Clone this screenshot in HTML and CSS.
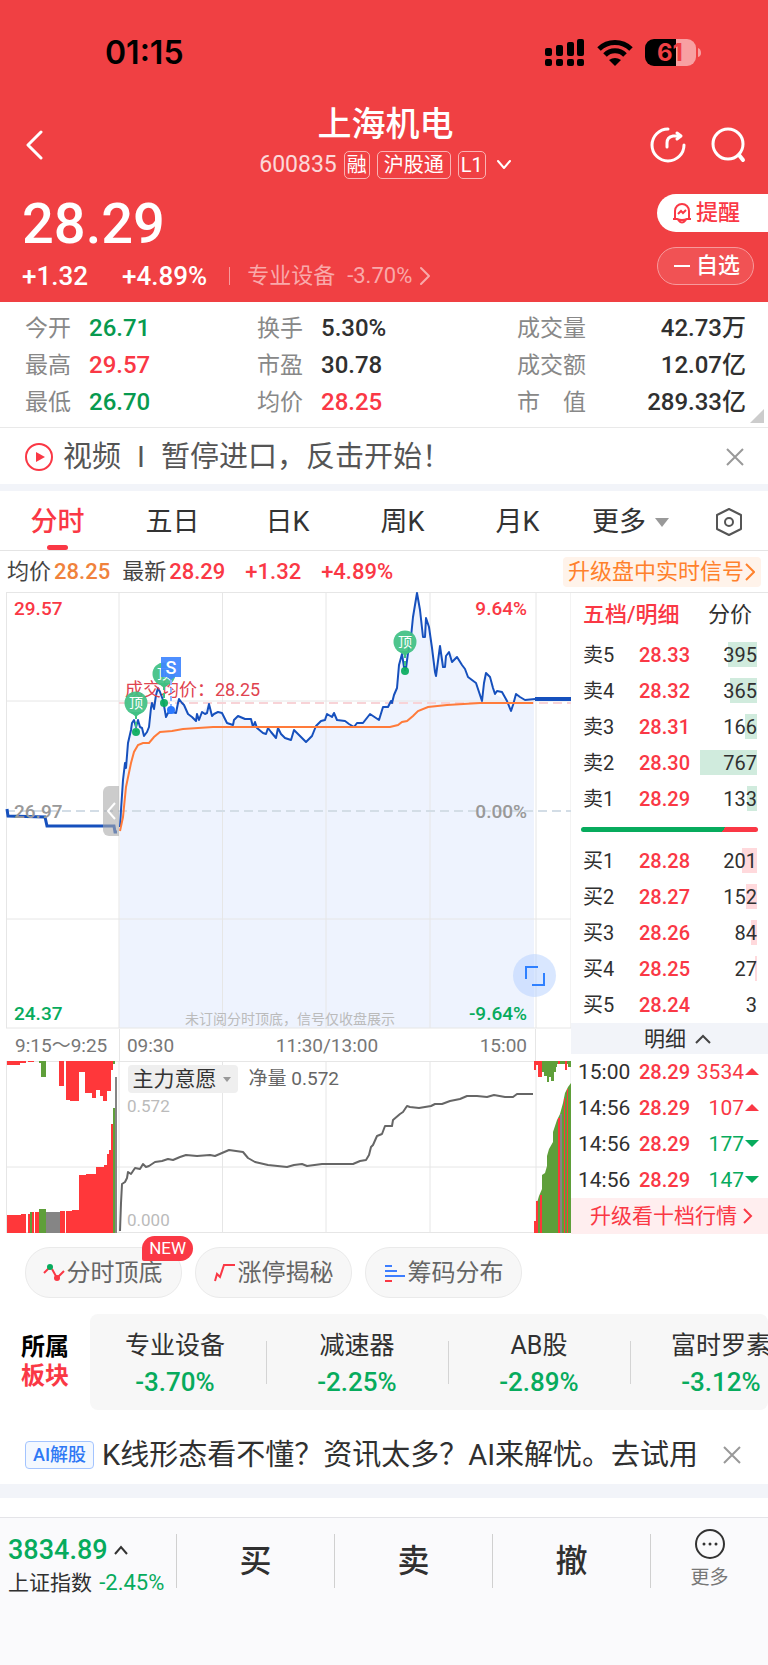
FILE: index.html
```html
<!DOCTYPE html>
<html lang="zh-CN">
<head>
    <meta charset="UTF-8">
    <title>上海机电 600835</title>
    <meta name="viewport" content="width=device-width, initial-scale=1.0">
    <link rel="stylesheet" href="styles.css">
</head>
<body>
    <header class="top">
        <div class="status-bar">
            <span class="clock">01:15</span>
            <svg class="status-icons" width="158" height="28" viewBox="0 0 158 28">
                <rect x="0" y="9" width="7" height="8" rx="2"/>
                <rect x="11" y="6" width="7" height="11" rx="2"/>
                <rect x="22" y="3" width="7" height="14" rx="2"/>
                <rect x="32" y="0" width="7" height="17" rx="2"/>
                <rect x="0" y="20" width="7" height="7" rx="2"/>
                <rect x="11" y="20" width="7" height="7" rx="2"/>
                <rect x="22" y="20" width="7" height="7" rx="2"/>
                <rect x="32" y="20" width="7" height="7" rx="2"/>
                <path d="M54 10 A23 23 0 0 1 86 10" fill="none" stroke="#000" stroke-width="5"/>
                <path d="M60 16 A14 14 0 0 1 80 16" fill="none" stroke="#000" stroke-width="5"/>
                <path d="M64 21 Q70 17 76 21 L70 27 Z"/>
                <path d="M109 0 H131 V27 H109 A9 9 0 0 1 100 18 V9 A9 9 0 0 1 109 0 Z"/>
                <path d="M131 0 H142 A9 9 0 0 1 151 9 V18 A9 9 0 0 1 142 27 H131 Z" fill="#f8a0a2"/>
                <path d="M153 9 Q156 10 156 14 Q156 17 153 18 Z" fill="#f8a0a2"/>
                <text x="125" y="22" class="battery-text" text-anchor="middle">61</text>
            </svg>
        </div>
        <nav class="nav">
            <button class="icon-btn" aria-label="返回">
                <svg width="18" height="32" viewBox="0 0 18 32"><path d="M16 3 L3 16 L16 29"/></svg>
            </button>
            <div class="title">
                <h1>上海机电</h1>
                <div class="code-row">
                    <span class="code">600835</span>
                    <span class="tag">融</span>
                    <span class="tag wide">沪股通</span>
                    <span class="tag">L1</span>
                    <svg class="code-arrow" width="16" height="12" viewBox="0 0 16 12"><path d="M2 2 L8 9 L14 2"/></svg>
                </div>
            </div>
            <div class="nav-right">
                <button class="icon-btn" aria-label="分享">
                    <svg width="36" height="36" viewBox="0 0 36 36">
                        <path d="M18 2 A16 16 0 1 0 34 18"/>
                        <path d="M17 20 V16 Q17 10 23 9 H29"/>
                        <path d="M27 6 L31 9 L27 12" />
                    </svg>
                </button>
                <button class="icon-btn" aria-label="搜索">
                    <svg width="36" height="36" viewBox="0 0 36 36">
                        <circle cx="18" cy="17" r="15"/>
                        <path d="M29 28 L33 33" stroke-width="4"/>
                    </svg>
                </button>
            </div>
        </nav>
        <div class="quote">
            <div class="quote-left">
                <div class="price">28.29</div>
                <div class="change">
                    <span>+1.32</span>
                    <span>+4.89%</span>
                    <a class="industry" href="#">专业设备 <span>-3.70%</span>
                        <svg width="12" height="20" viewBox="0 0 12 20"><path d="M2 2 L10 10 L2 18"/></svg>
                    </a>
                </div>
            </div>
            <div class="quote-right">
                <button class="remind">
                    <svg width="20" height="22" viewBox="0 0 20 22">
                        <path d="M3 17 V9 A7 7 0 0 1 17 9 V17 M1 17 H5 Q10 19 15 17 H19 M6 18 Q10 23 14 18 M6 12 L9 9 L11 11 L14 8"/>
                    </svg>提醒
                </button>
                <button class="fav">
                    <svg width="20" height="22" viewBox="0 0 20 22"><path d="M2 11 H18"/></svg>自选
                </button>
            </div>
        </div>
    </header>

    <section class="stats">
        <dl>
            <div><dt>今开</dt><dd class="down-deep">26.71</dd></div>
            <div><dt>最高</dt><dd class="up">29.57</dd></div>
            <div><dt>最低</dt><dd class="down-deep">26.70</dd></div>
        </dl>
        <dl>
            <div><dt>换手</dt><dd>5.30%</dd></div>
            <div><dt>市盈</dt><dd>30.78</dd></div>
            <div><dt>均价</dt><dd class="up">28.25</dd></div>
        </dl>
        <dl class="last">
            <div><dt>成交量</dt><dd>42.73万</dd></div>
            <div><dt>成交额</dt><dd>12.07亿</dd></div>
            <div><dt>市　值</dt><dd>289.33亿</dd></div>
        </dl>
        <span class="corner"></span>
    </section>

    <section class="news">
        <svg width="28" height="28" viewBox="0 0 28 28">
            <circle cx="14" cy="14" r="13" fill="none" stroke="#fa3845" stroke-width="2"/>
            <path d="M11 9 L20 14 L11 19 Z" fill="#fa3845"/>
        </svg>
        <a href="#">视频<span class="bar">I</span>暂停进口，反击开始！</a>
        <button class="close" aria-label="关闭"><svg width="18" height="18" viewBox="0 0 18 18"><path d="M1 1 L17 17 M17 1 L1 17"/></svg></button>
    </section>

    <nav class="tabs">
        <button class="active">分时</button>
        <button>五日</button>
        <button>日K</button>
        <button>周K</button>
        <button>月K</button>
        <button>更多<span class="caret"></span></button>
        <button aria-label="设置">
            <svg width="28" height="30" viewBox="0 0 28 30">
                <path d="M14 2 L26 8 V22 L14 28 L2 22 V8 Z"/>
                <circle cx="14" cy="15" r="4"/>
            </svg>
        </button>
    </nav>

    <div class="info">
        <span>均价</span><b class="avg">28.25</b>
        <span class="latest">最新</span><b class="up">28.29</b>
        <b class="up gap">+1.32</b><b class="up gap">+4.89%</b>
        <a class="upgrade" href="#">升级盘中实时信号<svg width="10" height="18" viewBox="0 0 10 18"><path d="M1 1 L9 9 L1 17"/></svg></a>
    </div>

    <main class="market">
        <div class="charts">
            <div class="chart-box">
                <svg class="chart" viewBox="0 0 571 437">
                    <path class="fill" d="M119 436 L120 235 L121 218 L123 188 L125 171 L126 176 L128 151 L132 131 L134 128 L136 135 L138 128 L140 135 L144 144 L149 135 L151 116 L152 111 L154 117 L158 96 L163 108 L166 125 L172 120 L176 121 L179 107 L184 113 L188 122 L196 129 L202 120 L209 112 L212 124 L222 121 L227 131 L233 133 L238 124 L251 127 L257 136 L266 142 L268 136 L276 146 L278 136 L285 146 L291 148 L294 138 L306 150 L316 134 L327 122 L334 121 L337 128 L354 135 L370 122 L379 128 L383 115 L391 109 L397 96 L399 73 L402 62 L406 76 L411 45 L417 1 L423 45 L426 26 L432 56 L436 84 L440 54 L445 75 L449 60 L457 65 L468 85 L476 91 L482 109 L486 81 L495 102 L507 109 L511 119 L516 102 L525 108 L534 107 V436 Z"/>
                    <path class="grid" d="M6.500 0 V436 M119 0 V436 M222.500 0 V436 M326 0 V436 M430 0 V436 M536 0 V436 M571 0 V436 M6 .5 H571 M6 109 H571 M6 327 H571 M6 436 H571"/>
                    <path class="dash-red" d="M119 111 H571"/>
                    <path class="dash-grey" d="M6 219 H571"/>
                    <path class="line-price" d="M7 217 L8 224 L45 225 L47 234 H114 L115 240 H117"/>
                    <path class="line-price thin" d="M120 235 L121 218 L123 188 L125 171 L126 176 L128 151 L131 138 L132 131 L134 128 L136 135 L138 128 L140 135 L142 136 L144 144 L147 140 L149 135 L151 116 L152 111 L154 117 L156 103 L158 96 L160 100 L163 108 L166 125 L168 121 L172 120 L176 121 L178 111 L179 107 L182 111 L184 113 L188 122 L192 125 L196 129 L197 122 L199 128 L202 120 L205 122 L207 121 L209 112 L212 124 L214 122 L218 120 L222 121 L227 131 L233 133 L234 128 L238 124 L245 127 L251 127 L253 135 L255 130 L257 136 L263 141 L266 142 L268 136 L271 140 L276 146 L278 136 L281 142 L285 146 L291 148 L294 138 L297 141 L301 145 L306 150 L312 144 L316 134 L321 129 L325 128 L327 122 L332 125 L334 121 L337 128 L345 129 L349 132 L354 135 L357 131 L363 131 L370 122 L379 128 L383 115 L388 115 L391 109 L392 111 L394 103 L397 96 L399 73 L402 62 L404 75 L406 76 L408 61 L411 45 L413 25 L417 1 L420 18 L423 45 L425 45 L426 26 L429 35 L432 56 L435 80 L436 84 L440 54 L443 75 L445 75 L446 64 L449 60 L452 70 L457 65 L462 73 L465 77 L468 85 L476 91 L479 100 L482 109 L484 91 L486 81 L490 85 L493 96 L495 102 L497 99 L502 100 L507 109 L511 119 L513 113 L516 102 L520 105 L525 108 L535 107"/>
                    <path class="line-price thick" d="M535 107 H571"/>
                    <path class="line-avg" d="M120 239 L123 225 L126 195 L131 171 L134 160 L138 153 L143 151 L149 151 L154 145 L160 140 L172 139 L183 137 L213 135 L253 135 L320 135 L390 135 L398 133 L402 130 L407 129 L413 124 L418 119 L428 115 L447 113 L480 111 L533 111"/>
                    <text class="deal" x="125" y="104">成交均价：28.25</text>
                    <g class="pin">
                        <path d="M136 122 V140 M164 93 V111 M405 61 V79"/>
                        <circle class="dot" cx="136" cy="140" r="4"/>
                        <circle class="dot" cx="164" cy="111" r="4"/>
                        <circle class="dot" cx="405" cy="79" r="4"/>
                        <circle cx="136" cy="111" r="11.500"/><path class="tip" d="M130 120 L136 125 L142 120"/>
                        <circle cx="164" cy="82" r="11.500"/><path class="tip" d="M158 91 L164 96 L170 91"/>
                        <circle cx="405" cy="50" r="11.500"/><path class="tip" d="M399 59 L405 64 L411 59"/>
                        <text x="136" y="116">顶</text>
                        <text x="164" y="87">顶</text>
                        <text x="405" y="55">顶</text>
                    </g>
                    <g class="sell">
                        <path d="M171 88 V115"/>
                        <circle cx="171" cy="118" r="4"/>
                        <rect x="161" y="65" width="20" height="20"/>
                        <path class="tip" d="M167 85 L171 88 L175 85"/>
                        <text x="171" y="82">S</text>
                    </g>
                    <path class="handle" d="M119 194 H109 A6 6 0 0 0 103 200 V238 A6 6 0 0 0 109 244 H119 Z"/>
                    <path class="handle-arrow" d="M115 211 L108 219 L115 227"/>
                    <text class="axis up" x="14" y="23">29.57</text>
                    <text class="axis up end" x="527" y="23">9.64%</text>
                    <text class="axis mid" x="14" y="226">26.97</text>
                    <text class="axis mid end" x="527" y="226">0.00%</text>
                    <text class="axis down" x="14" y="428">24.37</text>
                    <text class="axis down end" x="527" y="428">-9.64%</text>
                    <text class="tip-text" x="185" y="432">未订阅分时顶底，信号仅收盘展示</text>
                </svg>
                <button class="expand" aria-label="全屏">
                    <svg width="20" height="20" viewBox="0 0 20 20"><path d="M1 13 V1 H13 M19 7 V19 H7"/></svg>
                </button>
            </div>
            <div class="times">
                <span class="auction">9:15～9:25</span>
                <div class="session"><span>09:30</span><span>11:30/13:00</span><span>15:00</span></div>
            </div>
            <div class="chart-box">
                <svg class="chart" viewBox="0 0 571 172">
                    <path class="grid" d="M6.500 0 V172 M119 0 V172 M222.500 0 V172 M326 0 V172 M430 0 V172 M536 0 V172 M571 0 V172 M6 .5 H571 M6 106 H571 M6 171.500 H571"/>
                    <!-- auction, unmatched volume hangs from the top -->
                    <path class="bar-red" d="M7 0 V4 H20 V2 H26 V0 Z M28 0 H34 V1 H28 Z M59 0 V25 H64 V0 Z M66 0 V39 H70 V40 H79 V11 H85 V32 H92 V37 H96 V29 H100 V35 H103 V40 H107 V30 H111 V9 H113 V0 Z"/>
                    <path class="bar-green" d="M39 0 V2 H41 V16 H46 V0 Z M113 0 H115 V3 H113 Z"/>
                    <path class="bar-red" d="M7 172 V154 H21 V153 H26 V172 Z M28 172 V153 H30 V172 Z M32 172 V151 H34 V172 Z M35 172 V151 H39 V172 Z M60 172 V150 H65 V172 Z M66 172 V150 H72 V149 H79 V114 H86 V113 H96 V106 H104 V104 H107 V93 H109 V89 H111 V63 H113 V172 Z"/>
                    <path class="bar-green" d="M30 172 V151 H32 V172 Z M39 172 V148 H46 V172 Z M113 172 V47 H115 V172 Z"/>
                    <path class="bar-grey" d="M46 172 V151 H60 V172 Z M115 172 V16 H117 V172 Z"/>
                    <!-- closing auction -->
                    <path class="bar-green" d="M536 172 V145 L539 135 L542 128 V114 L545 112 L547 105 V95 L549 88 L553 81 V71 L557 59 L560 53 L563 42 L565 32 L568 26 L571 22 V172 Z"/>
                    <path class="bar-red" d="M534 172 V160 H536 V140 H538 V172 Z M540 172 V134 H542 V172 Z M558 172 V57 H560 V172 Z M564 172 V37 H565 V172 Z M567 172 V28 H568 V172 Z"/>
                    <path class="bar-grey" d="M560 172 V53 H562 V172 Z"/>
                    <path class="bar-green" d="M541 0 V11 H544 V15 H547 V21 H549 V16 H551 V20 H554 V11 H556 V6 H557 V3 H568 V6 H571 V0 Z"/>
                    <path class="bar-red" d="M534 0 V9 H536 V4 H538 V16 H542 V0 Z M558 0 V3 H560 V0 Z M565 0 V9 H567 V0 Z"/>
                    <path class="line-net" d="M120 170 L121 142 L122 123 L125 121 L127 117 L128 111 L131 113 L135 107 L140 108 L143 103 L146 106 L149 105 L155 101 L162 100 L168 98 L173 99 L180 96 L186 94 L197 95 L210 94 L215 95 L222 92 L229 89 L243 91 L248 97 L255 101 L268 104 L287 106 L294 104 L302 103 L307 105 L322 103 L353 103 L360 100 L366 99 L369 94 L371 86 L373 84 L377 75 L382 73 L385 65 L392 65 L393 59 L400 53 L403 51 L407 45 L410 46 L419 47 L431 45 L435 43 L442 43 L450 40 L460 38 L467 35 L477 35 L487 36 L494 34 L505 36 L513 36 L517 33 L533 33"/>
                    <text class="net-axis" x="127" y="51">0.572</text>
                    <text class="net-axis" x="127" y="165">0.000</text>
                </svg>
                <div class="net-head">
                    <button>主力意愿<span class="caret"></span></button>
                    <span>净量 0.572</span>
                </div>
            </div>
        </div>

        <aside class="book">
            <div class="book-tabs"><button class="active">五档/明细</button><button>分价</button></div>
            <table class="sells">
                <tr><th>卖5</th><td>28.33</td><td class="qty"><i style="width: 29px"></i>395</td></tr>
                <tr><th>卖4</th><td>28.32</td><td class="qty"><i style="width: 27px"></i>365</td></tr>
                <tr><th>卖3</th><td>28.31</td><td class="qty"><i style="width: 12px"></i>166</td></tr>
                <tr><th>卖2</th><td>28.30</td><td class="qty"><i style="width: 57px"></i>767</td></tr>
                <tr><th>卖1</th><td>28.29</td><td class="qty"><i style="width: 10px"></i>133</td></tr>
            </table>
            <div class="ratio"></div>
            <table class="buys">
                <tr><th>买1</th><td>28.28</td><td class="qty"><i style="width: 15px"></i>201</td></tr>
                <tr><th>买2</th><td>28.27</td><td class="qty"><i style="width: 11px"></i>152</td></tr>
                <tr><th>买3</th><td>28.26</td><td class="qty"><i style="width: 6px"></i>84</td></tr>
                <tr><th>买4</th><td>28.25</td><td class="qty"><i style="width: 2px"></i>27</td></tr>
                <tr><th>买5</th><td>28.24</td><td class="qty">3</td></tr>
            </table>
            <button class="detail">明细<svg width="16" height="10" viewBox="0 0 16 10"><path d="M1 9 L8 2 L15 9"/></svg></button>
            <table class="trades">
                <tr><th>15:00</th><td>28.29</td><td class="vol rise">3534</td></tr>
                <tr><th>14:56</th><td>28.29</td><td class="vol rise">107</td></tr>
                <tr><th>14:56</th><td>28.29</td><td class="vol fall">177</td></tr>
                <tr><th>14:56</th><td>28.29</td><td class="vol fall">147</td></tr>
            </table>
            <a class="ten" href="#">升级看十档行情<svg width="10" height="16" viewBox="0 0 10 16"><path d="M1 1 L8 8 L1 15"/></svg></a>
        </aside>
    </main>

    <div class="chips">
        <button>
            <svg width="22" height="20" viewBox="0 0 22 20">
                <path d="M1 10 L6 5 M9 6 L14 15 L21 8" stroke="#fa3845"/>
                <circle cx="7" cy="4" r="3" fill="#07ab5d"/><circle cx="14" cy="15" r="3" fill="#fa3845"/>
            </svg>分时顶底<span class="badge">NEW</span>
        </button>
        <button>
            <svg width="22" height="20" viewBox="0 0 22 20"><path d="M1 18 L3 11 L6 14 L10 2 H21" stroke="#fa3845"/></svg>涨停揭秘
        </button>
        <button>
            <svg width="22" height="20" viewBox="0 0 22 20">
                <path d="M1 3 H8 M1 8 H13 M1 13 H21" stroke="#3d7eff"/><path d="M1 18 H8" stroke="#fa3845"/>
            </svg>筹码分布
        </button>
    </div>

    <section class="sector">
        <h2>所属<br><span>板块</span></h2>
        <div class="sector-card">
            <ul>
                <li>专业设备<b>-3.70%</b></li>
                <li>减速器<b>-2.25%</b></li>
                <li>AB股<b>-2.89%</b></li>
                <li>富时罗素<b>-3.12%</b></li>
            </ul>
        </div>
    </section>

    <section class="ai">
        <span class="ai-tag">AI解股</span>
        <a href="#">K线形态看不懂？资讯太多？AI来解忧。去试用</a>
        <button class="close" aria-label="关闭"><svg width="18" height="18" viewBox="0 0 18 18"><path d="M1 1 L17 17 M17 1 L1 17"/></svg></button>
    </section>

    <footer class="bottom">
        <div class="index">
            <div class="index-value">3834.89<svg width="14" height="10" viewBox="0 0 14 10"><path d="M1 9 L7 2 L13 9"/></svg></div>
            <div class="index-name">上证指数 <span>-2.45%</span></div>
        </div>
        <button class="trade">买</button>
        <button class="trade">卖</button>
        <button class="trade">撤</button>
        <button class="more">
            <svg width="32" height="32" viewBox="0 0 32 32">
                <circle cx="16" cy="16" r="14" fill="none" stroke="#333" stroke-width="2"/>
                <circle cx="10" cy="16" r="1.500"/><circle cx="16" cy="16" r="1.500"/><circle cx="22" cy="16" r="1.500"/>
            </svg>更多
        </button>
    </footer>
</body>
</html>
```

FILE: styles.css
```css
* {
    box-sizing: border-box;
}
body {
    margin: 0;
    min-height: 100vh;
    display: flex;
    flex-direction: column;
    background: #fff;
    color: #303030;
    font-family: Roboto, "Noto Sans CJK SC", sans-serif;
    font-size: 22px;
    line-height: 24px;
}
button {
    padding: 0;
    border: none;
    background: none;
    color: inherit;
    font: inherit;
    cursor: pointer;
}
a {
    color: inherit;
    text-decoration: none;
}
h1, h2, dl, dd, ul {
    margin: 0;
    padding: 0;
}
svg {
    flex: none;
}
.up {
    color: #fa3845;
    fill: #fa3845;
}
.down {
    color: #07ab5d;
    fill: #07ab5d;
}
.down-deep {
    color: #079a4f;
}

/* Header */
.top {
    background: #f04043;
    color: #fff;
}
.status-bar {
    display: flex;
    justify-content: space-between;
    align-items: center;
    height: 105px;
    padding: 0 65px 0 105px;
    color: #000;
}
.clock {
    font-family: Inter, sans-serif;
    font-size: 32px;
    font-weight: 600;
}
.battery-text {
    font-family: Inter, sans-serif;
    font-size: 24px;
    font-weight: 700;
    fill: #f04043;
}
.nav {
    display: grid;
    grid-template-columns: 1fr auto 1fr;
    align-items: center;
    padding: 0 22px 0 25px;
}
.nav svg, .change svg {
    display: block;
    fill: none;
    stroke: #fff;
    stroke-width: 3;
    stroke-linecap: round;
    stroke-linejoin: round;
}
.icon-btn {
    justify-self: start;
    padding-top: 6px;
}
.nav-right {
    display: flex;
    justify-content: flex-end;
    gap: 24px;
}
.title h1 {
    font-size: 34px;
    font-weight: 500;
    line-height: 38px;
    text-align: center;
}
.code-row {
    display: flex;
    align-items: center;
    justify-content: center;
    margin-top: 8px;
    gap: 7px;
}
.code {
    font-size: 23px;
    opacity: .8;
}
.tag {
    height: 28px;
    padding: 0 2px;
    border: 1px solid #f9b3b4;
    border-radius: 5px;
    font-size: 20px;
    line-height: 26px;
}
.tag.wide {
    padding: 0 6px;
}
.nav .code-arrow {
    margin-left: 3px;
    stroke-width: 2;
}
.quote {
    display: flex;
    justify-content: space-between;
    padding: 14px 0 14px 22px;
}
.price {
    padding-top: 1px;
    font-size: 56px;
    font-weight: 500;
    line-height: 60px;
}
.change {
    display: flex;
    gap: 34px;
    margin-top: 10px;
    font-size: 26px;
    font-weight: 500;
}
.industry {
    display: flex;
    align-items: center;
    gap: 12px;
    margin-left: -12px;
    color: #f9a9aa;
    font-size: 22px;
    font-weight: 400;
}
.industry::before {
    content: "";
    width: 1px;
    height: 18px;
    margin-right: 5px;
    background: #f79a9c;
}
.change svg {
    margin-left: -5px;
    stroke: #f9a9aa;
    stroke-width: 2;
}
.quote-right {
    display: flex;
    flex-direction: column;
    gap: 15px;
    width: 111px;
    padding-top: 1px;
}
.quote-right button {
    display: flex;
    align-items: center;
    gap: 4px;
    height: 38px;
    padding-left: 15px;
    font-size: 22px;
    font-weight: 500;
}
.quote-right svg {
    fill: none;
    stroke: currentColor;
    stroke-width: 2;
}
.remind {
    border-radius: 19px 0 0 19px;
    background: #fff;
    color: #fa3845;
}
.quote-right .fav {
    width: 97px;
    padding-left: 14px;
    border: 1px solid #f79a9c;
    border-radius: 19px;
    background: #f15254;
}

/* Stats */
.stats {
    position: relative;
    display: grid;
    grid-template-columns: 232px 1fr 251px;
    padding: 8px 0 6px 25px;
    border-bottom: 1px solid #e9e9e9;
}
.stats dl div {
    display: flex;
    gap: 18px;
    line-height: 37px;
}
.stats dt {
    color: #888;
    font-size: 23px;
}
.stats dd {
    font-size: 24px;
    font-weight: 500;
}
.stats .last div {
    justify-content: space-between;
    padding-right: 22px;
}
.corner {
    position: absolute;
    right: 4px;
    bottom: 4px;
    border-left: 14px solid transparent;
    border-bottom: 14px solid #ccc;
}

/* News */
.news {
    display: flex;
    align-items: center;
    height: 63px;
    padding: 1px 24px 0 25px;
    border-bottom: 7px solid #f2f4f9;
    color: #555;
    font-size: 29px;
}
.news a {
    margin: 0 auto 0 10px;
}
.news .bar {
    margin: 0 16px;
}
.close svg {
    display: block;
    stroke: #999;
    stroke-width: 2;
}

/* Tabs */
.tabs {
    display: grid;
    grid-template-columns: repeat(6, 1fr) 78px;
    height: 60px;
    border-bottom: 1px solid #e4e4e4;
    font-size: 27px;
}
.tabs button {
    position: relative;
    padding-top: 2px;
    color: #333;
}
.tabs .active {
    color: #fa3845;
    font-weight: 500;
}
.tabs .active::after {
    content: "";
    position: absolute;
    left: 47px;
    bottom: 0;
    width: 21px;
    height: 5px;
    border-radius: 3px;
    background: #fa3845;
}
.tabs svg {
    display: block;
    margin: 0 auto;
    fill: none;
    stroke: #555;
    stroke-width: 2;
    stroke-linejoin: round;
}
.caret {
    display: inline-block;
    margin-left: 10px;
    border: 7px solid transparent;
    border-top: 9px solid #999;
    border-bottom: none;
    vertical-align: 4px;
}
.tabs .caret {
    margin-right: 4px;
    margin-left: 9px;
}
.info {
    display: flex;
    align-items: center;
    height: 41px;
    padding: 1px 7px 0;
    color: #444;
}
.info b {
    margin-left: 3px;
    font-weight: 500;
}
.info .avg {
    color: #f0823c;
}
.info .latest {
    margin-left: 12px;
}
.info .gap {
    margin-left: 20px;
}
.upgrade {
    display: flex;
    align-items: center;
    gap: 1px;
    height: 30px;
    margin-left: auto;
    padding: 0 6px 0 5px;
    border-radius: 4px;
    background: #fff3ea;
    color: #ff812c;
}
.upgrade svg, .ten svg {
    fill: none;
    stroke: currentColor;
    stroke-width: 2;
}

/* Charts */
.market {
    display: grid;
    grid-template-columns: 1fr 197px;
}
.chart-box {
    position: relative;
}
.chart {
    display: block;
    width: 100%;
}
.chart path {
    fill: none;
}
.chart .grid {
    stroke: #e6e6e6;
    stroke-width: 1;
}
.chart .fill {
    fill: #eef3fe;
}
.dash-red {
    stroke: #f8d3d7;
    stroke-width: 2;
    stroke-dasharray: 9 5;
}
.dash-grey {
    stroke: #d3dde6;
    stroke-width: 2;
    stroke-dasharray: 9 5;
}
.line-price {
    stroke: #1650bd;
    stroke-width: 3;
}
.line-price.thin {
    stroke-width: 2;
    stroke-linejoin: round;
}
.line-price.thick {
    stroke-width: 4;
}
.line-avg {
    stroke: #ff7b3a;
    stroke-width: 2;
}
.line-net {
    stroke: #666;
    stroke-width: 2;
    stroke-linejoin: round;
}
.chart .bar-red {
    fill: #ff373a;
}
.chart .bar-green {
    fill: #5f9f3a;
}
.chart .bar-grey {
    fill: #858585;
}
.pin circle, .chart .pin .tip {
    fill: #3fc083;
    fill-opacity: .92;
}
.pin .dot {
    fill: #07ab5d;
}
.pin path {
    stroke: #3fc083;
    stroke-width: 2;
    stroke-dasharray: 5 3;
}
.pin .tip, .sell .tip {
    stroke: none;
}
.pin text {
    fill: #fff;
    font-size: 14px;
    text-anchor: middle;
}
.sell rect, .chart .sell .tip {
    fill: #3f86ff;
    fill-opacity: .92;
}
.sell path {
    stroke: #8bb5ff;
    stroke-width: 2;
    stroke-dasharray: 5 3;
}
.sell circle {
    fill: #2a78ff;
}
.sell text {
    fill: #fff;
    font-size: 18px;
    font-weight: 500;
    text-anchor: middle;
}
.chart .handle {
    fill: #aaa;
    fill-opacity: .6;
}
.handle-arrow {
    stroke: #fff;
    stroke-width: 2;
}
.deal {
    fill: #e0434f;
    font-size: 18px;
}
.axis {
    font-size: 19px;
    font-weight: 500;
}
.axis.mid {
    fill: #999;
}
.axis.end {
    text-anchor: end;
}
.tip-text {
    fill: #bbb;
    font-size: 14px;
}
.net-axis {
    fill: #bbb;
    font-size: 17px;
}
.expand {
    position: absolute;
    right: 15px;
    bottom: 32px;
    width: 43px;
    height: 43px;
    border-radius: 50%;
    background: rgba(180, 207, 255, .5);
}
.expand svg {
    display: block;
    margin: 0 auto;
    fill: none;
    stroke: #2f80ff;
    stroke-width: 2;
}
.times {
    display: flex;
    height: 32px;
    color: #777;
    font-size: 19px;
    line-height: 33px;
}
.auction {
    width: 21%;
    padding-left: 15px;
    border-right: 1px solid #e6e6e6;
}
.session {
    display: flex;
    flex: 1;
    justify-content: space-between;
    padding: 0 8px 0 7px;
    margin-right: 35px;
    border-right: 1px solid #e6e6e6;
}
.net-head {
    position: absolute;
    top: 4px;
    left: 22%;
    display: flex;
    align-items: center;
    gap: 11px;
    color: #666;
    font-size: 19px;
}
.net-head button {
    height: 28px;
    margin-left: 2px;
    padding: 0 7px 0 5px;
    border-radius: 4px;
    background: #efefef;
    color: #333;
    font-size: 21px;
}
.net-head .caret {
    margin-left: 6px;
    border-width: 5px 4px 0;
}

/* Order book */
.book {
    border-top: 1px solid #e6e6e6;
    font-size: 21px;
}
.book-tabs {
    display: flex;
    justify-content: space-between;
    height: 44px;
    padding: 0 16px 0 12px;
    font-size: 22px;
}
.book-tabs .active {
    color: #fa3845;
    font-weight: 500;
}
.book table {
    width: 100%;
    border-collapse: collapse;
}
.book tr {
    height: 36px;
}
.book th, .book td {
    padding: 0;
    text-align: left;
}
.book th {
    width: 68px;
    padding-left: 12px;
    font-size: 20px;
    font-weight: 400;
}
.book td {
    color: #fa3845;
    font-size: 20px;
    font-weight: 500;
}
.book .qty {
    position: relative;
    padding-right: 11px;
    color: #303030;
    font-weight: 400;
    text-align: right;
    z-index: 0;
}
.qty i {
    position: absolute;
    top: 5px;
    right: 11px;
    height: 25px;
    background: #d0ebdd;
    z-index: -1;
}
.buys .qty i {
    background: #ffd9dc;
}
.ratio {
    height: 5px;
    margin: 10px 10px 11px;
    border-radius: 3px;
    background: linear-gradient(125deg, #07ab5d 80%, #fa3845 80%);
}
.detail {
    display: flex;
    justify-content: center;
    align-items: center;
    gap: 9px;
    width: 100%;
    height: 31px;
    padding-left: 16px;
    background: #f2f4f9;
}
.detail svg {
    fill: none;
    stroke: #444;
    stroke-width: 2;
}
.trades th {
    padding-left: 7px;
    font-size: 21px;
}
.book .vol {
    padding-right: 9px;
    font-size: 21px;
    font-weight: 400;
    text-align: right;
}
.vol::after {
    content: "";
    display: inline-block;
    margin-left: 1px;
    border: 7px solid transparent;
    vertical-align: 4px;
}
.vol.rise::after {
    border-bottom: 7px solid #fa3845;
    border-top: none;
}
.book .fall {
    color: #07ab5d;
}
.vol.fall::after {
    border-top: 7px solid #07ab5d;
    border-bottom: none;
}
.ten {
    display: flex;
    justify-content: center;
    align-items: center;
    gap: 6px;
    height: 36px;
    padding-left: 4px;
    background: #ffeeef;
    color: #fa3845;
}

/* Tool chips */
.chips {
    display: flex;
    gap: 13px;
    padding: 13px 25px 16px;
}
.chips button {
    position: relative;
    display: flex;
    align-items: center;
    justify-content: center;
    gap: 2px;
    width: 157px;
    height: 51px;
    border: 1px solid #eaeaea;
    border-radius: 25px;
    background: #f7f7f7;
    color: #666;
    font-size: 24px;
}
.chips svg {
    fill: none;
    stroke-width: 2;
}
.badge {
    position: absolute;
    top: -12px;
    right: -12px;
    padding: 0 7px;
    border-radius: 13px 13px 13px 2px;
    background: #fa3845;
    color: #fff;
    font-size: 17px;
    line-height: 25px;
}

/* Sector */
.sector {
    display: flex;
    align-items: center;
}
.sector h2 {
    width: 90px;
    padding-left: 21px;
    color: #000;
    font-size: 24px;
    font-weight: 700;
    line-height: 29px;
}
.sector h2 span {
    color: #fa3845;
}
.sector-card {
    flex: 1;
    min-width: 0;
    height: 96px;
    border-radius: 8px;
    background: #f7f7f7;
    overflow: hidden;
}
.sector ul {
    display: flex;
    margin-left: -6px;
    padding-top: 14px;
    list-style: none;
}
.sector li {
    position: relative;
    flex: 0 0 182px;
    font-size: 25px;
    line-height: 36px;
    text-align: center;
}
.sector li + li::before {
    content: "";
    position: absolute;
    left: 0;
    top: 13px;
    width: 1px;
    height: 43px;
    background: #d4d4d4;
}
.sector b {
    display: block;
    color: #07ab5d;
    font-size: 26px;
    font-weight: 500;
}

/* AI banner */
.ai {
    display: flex;
    align-items: center;
    height: 88px;
    padding: 16px 27px 0 25px;
    border-bottom: 14px solid #f2f4f9;
    font-size: 29px;
    white-space: nowrap;
}
.ai a {
    margin: 0 auto 0 8px;
}
.ai-tag {
    height: 28px;
    padding: 0 7px;
    border: 1px solid #a3c4ff;
    border-radius: 4px;
    background: #f3f8ff;
    color: #2f78f5;
    font-size: 18px;
    font-weight: 500;
    line-height: 26px;
}

/* Bottom bar */
.bottom {
    display: grid;
    grid-template-columns: 176px 1fr 1fr 1fr 118px;
    grid-template-rows: 54px;
    flex: 1;
    margin-top: 19px;
    padding-top: 16px;
    border-top: 1px solid #e4e4e8;
    background: #fafafc;
}
.bottom > button {
    border-left: 1px solid #d0d0d0;
}
.index {
    padding-left: 8px;
    font-size: 21px;
    white-space: nowrap;
}
.index-value {
    padding-top: 4px;
    color: #07ab5d;
    font-size: 27px;
    font-weight: 500;
}
.index-value svg {
    margin-left: 6px;
    fill: none;
    stroke: #333;
    stroke-width: 2;
    vertical-align: 4px;
}
.index-name {
    margin-top: 9px;
}
.index-name span {
    margin-left: 2px;
    color: #07ab5d;
    font-size: 22px;
}
.trade {
    font-size: 32px;
    font-weight: 500;
}
.more {
    display: flex;
    flex-direction: column;
    align-items: center;
    justify-content: space-between;
    color: #777;
    font-size: 19px;
    line-height: 20px;
}
.more svg {
    margin-top: -6px;
    fill: #333;
}
```
